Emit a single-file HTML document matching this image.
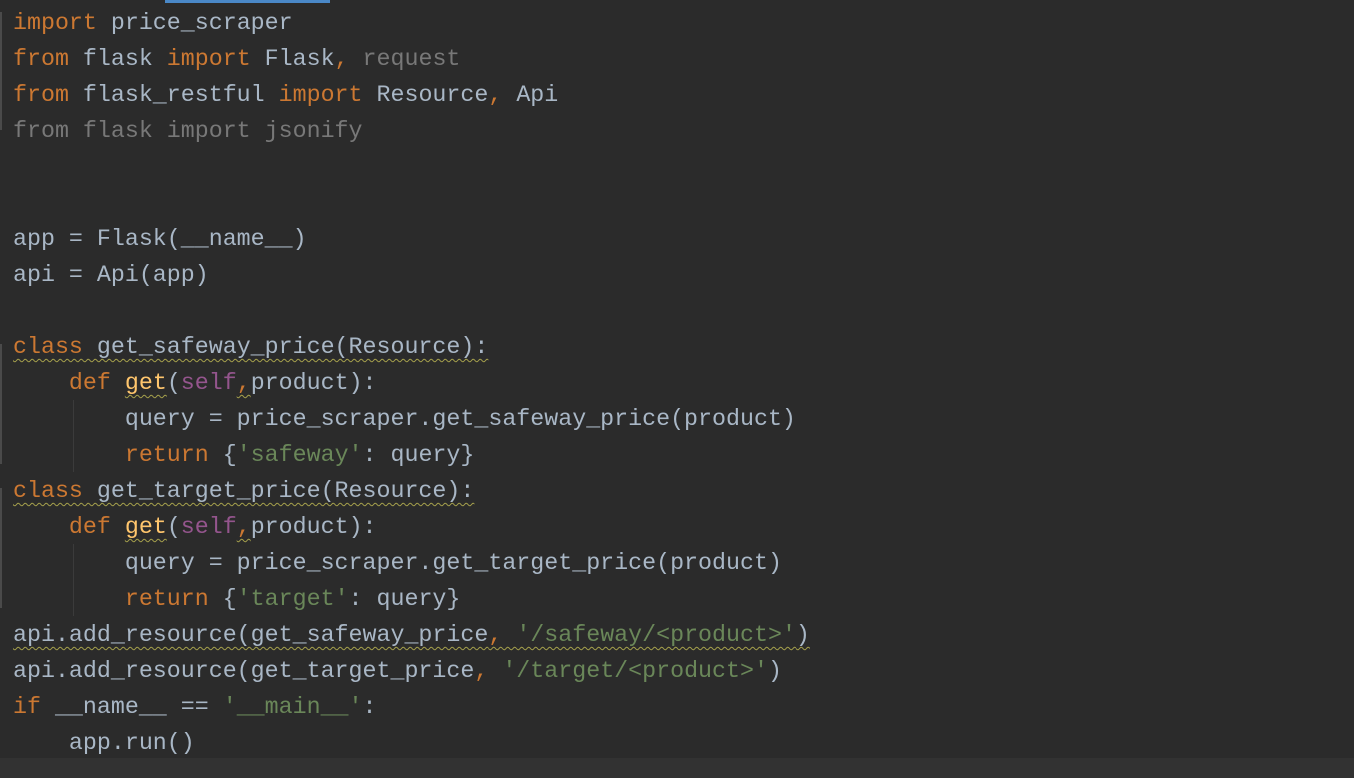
<!DOCTYPE html>
<html><head><meta charset="utf-8"><style>
html,body{margin:0;padding:0;background:#2b2b2b;width:1354px;height:778px;overflow:hidden}
.bar{position:absolute;left:165px;top:0;width:165px;height:3px;background:#4a88c7}
.foot{position:absolute;left:0;top:758px;width:1354px;height:20px;background:#323232}
pre{position:absolute;left:13px;top:5px;margin:0;font-family:"Liberation Mono",monospace;font-size:23.3px;line-height:36px;color:#a9b7c6}
.k{color:#cc7832}.s{color:#6a8759}.g{color:#787878}.p{color:#94558d}.f{color:#ffc66d}
.w{text-decoration:underline wavy #a6a14c;text-decoration-thickness:1px;text-underline-offset:5px}
.guide{position:absolute;left:73px;width:1px;background:#3b3b3b}
.gut{position:absolute;left:0;width:2px;background:#4a4a4a}
</style></head><body>
<div class="bar"></div>
<div class="foot"></div>
<div class="guide" style="top:400px;height:72px"></div>
<div class="guide" style="top:544px;height:72px"></div>
<div class="gut" style="top:12px;height:118px"></div>
<div class="gut" style="top:344px;height:120px"></div>
<div class="gut" style="top:488px;height:120px"></div>
<pre><span class="k">import</span> price_scraper
<span class="k">from</span> flask <span class="k">import</span> Flask<span class="k">,</span> <span class="g">request</span>
<span class="k">from</span> flask_restful <span class="k">import</span> Resource<span class="k">,</span> Api
<span class="g">from flask import jsonify</span>


app = Flask(__name__)
api = Api(app)

<span class="w"><span class="k">class</span> get_safeway_price(Resource):</span>
    <span class="k">def</span> <span class="f w">get</span>(<span class="p">self</span><span class="k w">,</span>product):
        query = price_scraper.get_safeway_price(product)
        <span class="k">return</span> {<span class="s">'safeway'</span>: query}
<span class="w"><span class="k">class</span> get_target_price(Resource):</span>
    <span class="k">def</span> <span class="f w">get</span>(<span class="p">self</span><span class="k w">,</span>product):
        query = price_scraper.get_target_price(product)
        <span class="k">return</span> {<span class="s">'target'</span>: query}
<span class="w">api.add_resource(get_safeway_price<span class="k">,</span> <span class="s">'/safeway/&lt;product&gt;'</span>)</span>
api.add_resource(get_target_price<span class="k">,</span> <span class="s">'/target/&lt;product&gt;'</span>)
<span class="k">if</span> __name__ == <span class="s">'__main__'</span>:
    app.run()</pre>
</body></html>
